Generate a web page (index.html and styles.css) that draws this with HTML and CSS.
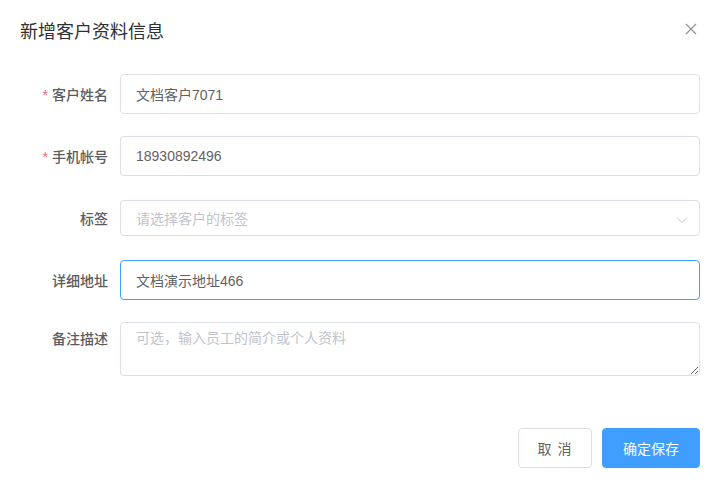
FILE: index.html
```html
<!DOCTYPE html>
<html lang="zh-CN">
<head>
<meta charset="utf-8">
<link rel="stylesheet" href="styles.css">
</head>
<body>
<div class="dialog">
  <div class="dialog-header">
    <span class="dialog-title">新增客户资料信息</span>
    <button class="dialog-close" aria-label="关闭">
      <svg width="12" height="12" viewBox="0 0 12 12"><path d="M1 1L11 11M11 1L1 11" stroke="#909399" stroke-width="1.2" fill="none"/></svg>
    </button>
  </div>
  <form class="form">
    <div class="form-item item-1">
      <label class="form-label"><span class="req">*</span>客户姓名</label>
      <div class="form-content"><input class="input" value="文档客户7071"></div>
    </div>
    <div class="form-item item-2">
      <label class="form-label"><span class="req">*</span>手机帐号</label>
      <div class="form-content"><input class="input" value="18930892496"></div>
    </div>
    <div class="form-item item-3">
      <label class="form-label">标签</label>
      <div class="form-content">
        <div class="select">
          <span class="placeholder">请选择客户的标签</span>
          <svg class="arrow" width="12" height="8" viewBox="0 0 12 8"><path d="M1 1.5L6 6.5L11 1.5" stroke="#c0c4cc" stroke-width="1" fill="none"/></svg>
        </div>
      </div>
    </div>
    <div class="form-item item-4">
      <label class="form-label">详细地址</label>
      <div class="form-content"><input class="input focused" value="文档演示地址466"></div>
    </div>
    <div class="form-item item-5">
      <label class="form-label">备注描述</label>
      <div class="form-content"><textarea class="textarea" placeholder="可选，输入员工的简介或个人资料"></textarea></div>
    </div>
  </form>
  <div class="dialog-footer">
    <button class="btn btn-default">取 消</button>
    <button class="btn btn-primary">确定保存</button>
  </div>
</div>
</body>
</html>
```
FILE: styles.css
```css
html, body {
  margin: 0;
  padding: 0;
  background: #ffffff;
}
body {
  font-family: "Liberation Sans", "Noto Sans CJK SC", sans-serif;
  color: #606266;
}
.dialog {
  width: 720px;
  height: 488px;
  background: #fff;
  box-sizing: border-box;
  display: flex;
  flex-direction: column;
}
.dialog-header {
  display: flex;
  justify-content: space-between;
  align-items: center;
  padding: 20px 23px 0 20px;
  height: 24px;
}
.dialog-title {
  font-size: 18px;
  line-height: 24px;
  color: #303133;
}
.dialog-close {
  border: 0;
  background: none;
  padding: 0;
  width: 12px;
  height: 12px;
  display: flex;
  margin-top: -6px;
}
.form {
  padding: 30px 20px 0 0;
}
.form-item {
  display: flex;
  align-items: center;
}
.item-1 { margin-bottom: 22px; }
.item-2 { margin-bottom: 24px; }
.item-3 { margin-bottom: 24px; }
.item-4 { margin-bottom: 22px; }
.item-5 { align-items: flex-start; }
.form-label {
  width: 120px;
  box-sizing: border-box;
  padding-right: 12px;
  text-align: right;
  font-size: 14px;
  font-weight: 500;
  color: #5a5c61;
  flex-shrink: 0;
}
.item-5 .form-label { padding-top: 6px; }
.req {
  color: #f56c6c;
  margin-right: 4px;
  font-weight: 400;
}
.form-content {
  flex: 1;
}
.input {
  display: block;
  width: 100%;
  height: 40px;
  box-sizing: border-box;
  border: 1px solid #dcdfe6;
  border-radius: 4px;
  padding: 0 15px;
  font-family: inherit;
  font-size: 14px;
  color: #606266;
  outline: none;
  background: #fff;
}
.input.focused {
  border-color: #409eff;
}
.select {
  height: 36px;
  box-sizing: border-box;
  border: 1px solid #dcdfe6;
  border-radius: 4px;
  padding: 0 15px;
  display: flex;
  align-items: center;
  justify-content: space-between;
}
.placeholder {
  font-size: 14px;
  color: #c0c4cc;
}
.arrow {
  margin-right: -4px;
  margin-top: 3px;
}
.textarea {
  display: block;
  width: 100%;
  height: 54px;
  box-sizing: border-box;
  border: 1px solid #dcdfe6;
  border-radius: 4px;
  padding: 5px 15px;
  font-family: inherit;
  font-size: 14px;
  line-height: 1.5;
  color: #606266;
  outline: none;
  resize: vertical;
}
.textarea::placeholder {
  color: #c0c4cc;
}
.dialog-footer {
  margin-top: auto;
  padding: 0 20px 20px 20px;
  display: flex;
  justify-content: flex-end;
  gap: 10px;
}
.btn {
  height: 40px;
  border-radius: 4px;
  font-family: inherit;
  font-size: 14px;
  padding: 0;
  white-space: nowrap;
  cursor: pointer;
}
.btn-default {
  width: 74px;
  background: #fff;
  border: 1px solid #dcdfe6;
  color: #606266;
  letter-spacing: 1px;
}
.btn-primary {
  width: 98px;
  background: #409eff;
  border: 1px solid #409eff;
  color: #fff;
}
```
